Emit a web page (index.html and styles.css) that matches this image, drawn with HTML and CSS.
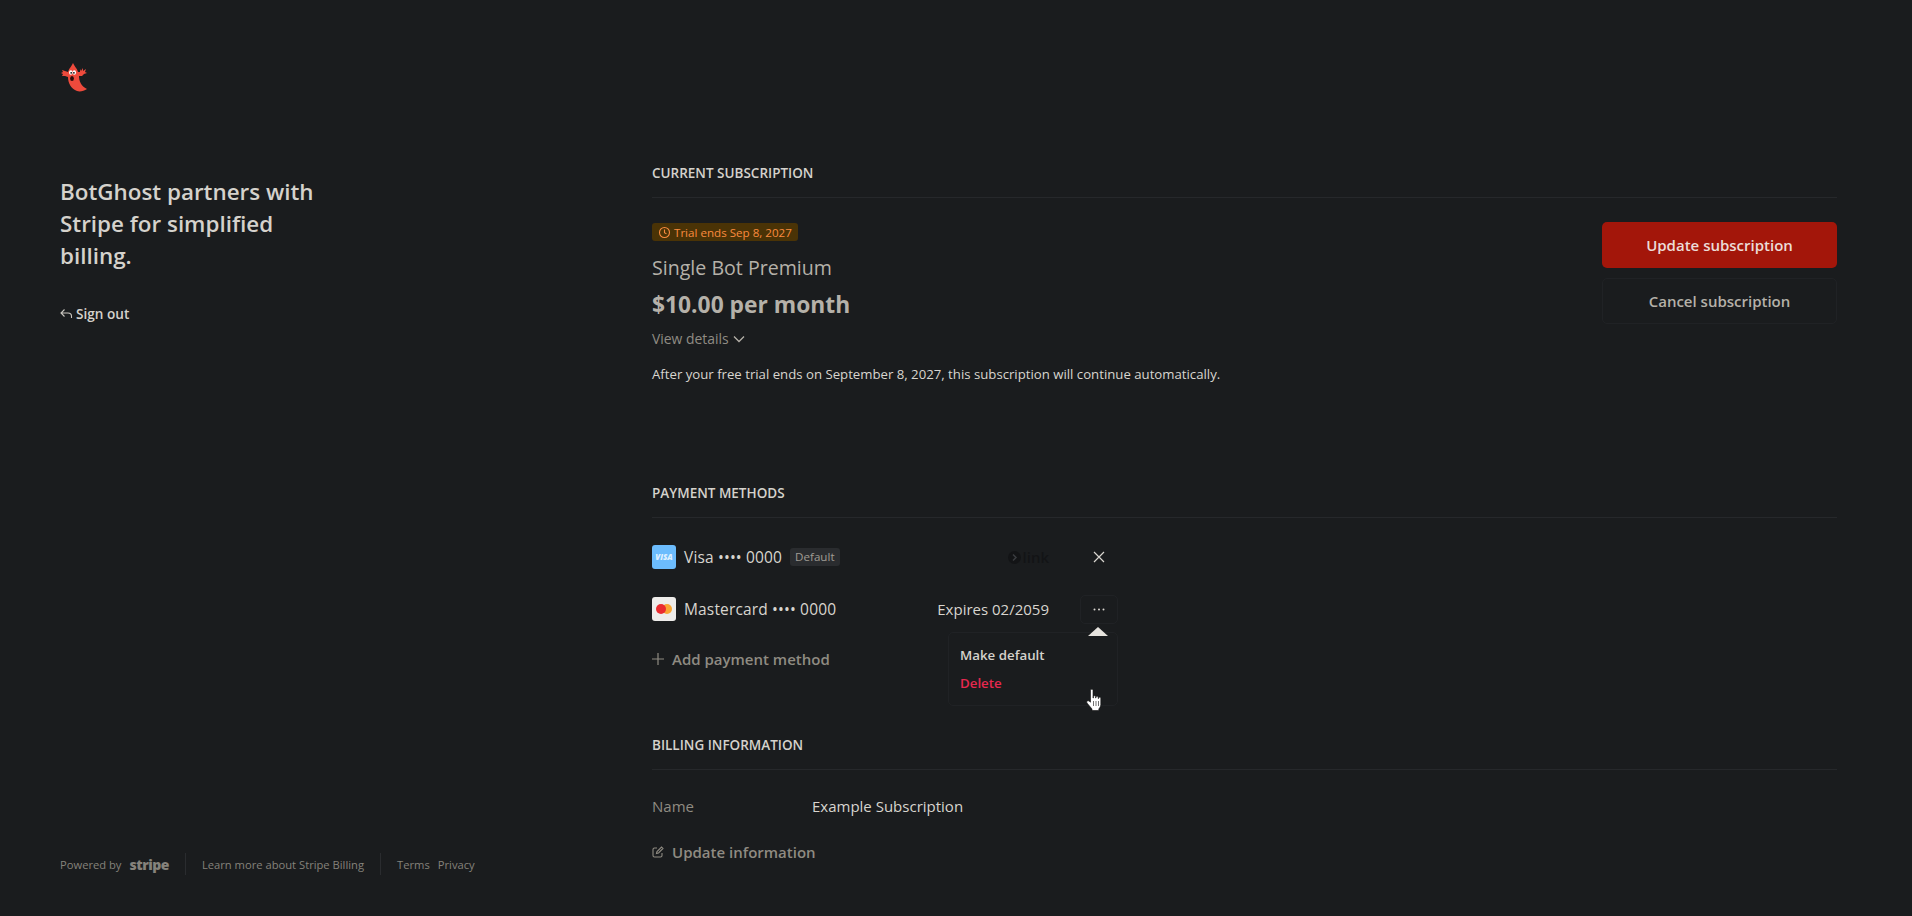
FILE: index.html
```html
<!DOCTYPE html>
<html lang="en">
<head>
<meta charset="UTF-8">
<meta name="viewport" content="width=device-width, initial-scale=1.0">
<title>BotGhost billing</title>
<link rel="stylesheet" href="styles.css">
</head>
<body>

<div class="page">
  <aside class="side">
    <div class="side-top">
      <svg class="ghost" width="28" height="29" viewBox="0 0 28 29">
        <path d="M13 0 C14 3 17 5 18 9 L20 9 L20 6 L21 8 L23 5 L23 8 L26 6 L25 9 L27 10 L24 11 L22 13 L19 13 C19 18 21 23 27 26 C24 28 20 29 17 28 C11 26 8 20 8 14 L5 13 L2 13 L3 11 L1 10 L3 9 L2 7 L5 8 L8 9 C9 5 12 3 13 0 Z" fill="#ee4a3c"/>
        <ellipse cx="10.800" cy="9.500" rx="1.800" ry="2.200" fill="#fff"/>
        <ellipse cx="14.300" cy="9.500" rx="1.800" ry="2.200" fill="#fff"/>
        <circle cx="11.200" cy="9.800" r="0.900" fill="#111"/>
        <circle cx="13.900" cy="9.800" r="0.900" fill="#111"/>
        <ellipse cx="12" cy="15.500" rx="1.900" ry="2.500" fill="#2a0c0c"/>
      </svg>
      <h1 class="tagline">BotGhost partners with Stripe for simplified billing.</h1>
      <a class="signout">
        <svg width="13" height="12" viewBox="0 0 13 12" fill="none" stroke="#c9c6c0" stroke-width="1.1"><path d="M4.500 1.500 1 5l3.500 3.500M1 5h7c2 0 3.500 1.300 3.500 3.200V10"/></svg>
        Sign out
      </a>
    </div>
    <div class="side-foot">
      <span>Powered by</span>
      <span class="stripe-logo">stripe</span>
      <span class="foot-sep"></span>
      <span>Learn more about Stripe Billing</span>
      <span class="foot-sep"></span>
      <span>Terms</span>
      <span class="foot-privacy">Privacy</span>
    </div>
  </aside>

  <main class="main">
    <section class="sub">
      <h2 class="sec-title">CURRENT SUBSCRIPTION</h2>
      <div class="sub-body">
        <div class="sub-info">
          <span class="trial">
            <svg width="13" height="13" viewBox="0 0 13 13" fill="none" stroke="#f98b3f" stroke-width="1.1"><circle cx="6.500" cy="6.500" r="5"/><path d="M6.500 3.500v3.200l2 1.200"/></svg>
            Trial ends Sep 8, 2027
          </span>
          <div class="plan">Single Bot Premium</div>
          <div class="price">$10.00 per month</div>
          <div class="details">View details
            <svg width="12" height="8" viewBox="0 0 12 8" fill="none" stroke="#b5b1a9" stroke-width="1.300"><path d="M1 1.500 6 6.500l5-5"/></svg>
          </div>
          <p class="note">After your free trial ends on September 8, 2027, this subscription will continue automatically.</p>
        </div>
        <div class="sub-actions">
          <button class="btn btn-primary">Update subscription</button>
          <button class="btn btn-ghost">Cancel subscription</button>
        </div>
      </div>
    </section>

    <section class="pay">
      <h2 class="sec-title">PAYMENT METHODS</h2>
      <div class="cards">
        <div class="card-row">
          <svg class="card-icon" width="24" height="24" viewBox="0 0 24 24"><rect width="24" height="24" rx="3" fill="#6cbcfd"/><text class="visa-text" x="12" y="15" text-anchor="middle">VISA</text></svg>
          <span class="card-name">Visa •••• 0000</span>
          <span class="default">Default</span>
          <span class="card-right link-mark">
            <svg width="13" height="13" viewBox="0 0 13 13"><circle cx="6.500" cy="6.500" r="6.500" fill="#131416"/><path d="M5 3.500 8 6.500 5 9.500" fill="none" stroke="#3a3c3f" stroke-width="1.500"/></svg>
            link
          </span>
          <span class="card-btn">
            <svg width="12" height="12" viewBox="0 0 12 12" fill="none" stroke="#d9d6d0" stroke-width="1.200"><path d="M1 1l10 10M11 1 1 11"/></svg>
          </span>
        </div>
        <div class="card-row">
          <svg class="card-icon" width="24" height="24" viewBox="0 0 24 24"><rect width="24" height="24" rx="3" fill="#eeecea"/><circle cx="15" cy="12" r="5" fill="#f9a533"/><circle cx="9" cy="12" r="5" fill="#ea2b2f"/></svg>
          <span class="card-name">Mastercard •••• 0000</span>
          <span class="card-right">Expires 02/2059</span>
          <span class="card-btn card-btn-open">
            <svg width="12" height="3" viewBox="0 0 12 3" fill="#d9d6d0"><circle cx="1.500" cy="1.500" r="1"/><circle cx="6" cy="1.500" r="1"/><circle cx="10.500" cy="1.500" r="1"/></svg>
          </span>
          <div class="menu">
            <div class="menu-arrow"></div>
            <div class="menu-item">Make default</div>
            <div class="menu-item menu-danger">Delete</div>
            <svg class="cursor" width="17" height="22" viewBox="0 0 17 22"><path d="M4.500 1.200c0-1.200 2.500-1.200 2.500 0V9h.4V7.500c0-1 2.200-1 2.200 0V9h.4V8c0-1 2.200-1 2.200 0v1.500h.4V9c0-1 2.200-1 2.200.2v6.300c0 2.500-1.500 3.500-2 4.500v1.500H6v-1.500L1 14c-1-1.500.5-3 2-2l1.500 1.200z" fill="#fff" stroke="#111" stroke-width=".6"/><path d="M7.500 12v5M10 12v5M12.500 12v5" stroke="#333" stroke-width=".7"/></svg>
          </div>
        </div>
      </div>
      <a class="add-link">
        <svg width="12" height="12" viewBox="0 0 12 12" fill="none" stroke="#8f8b82" stroke-width="1.200"><path d="M6 0v12M0 6h12"/></svg>
        Add payment method
      </a>
    </section>

    <section class="billing">
      <h2 class="sec-title">BILLING INFORMATION</h2>
      <div class="info-row">
        <span class="info-label">Name</span>
        <span class="info-value">Example Subscription</span>
      </div>
      <a class="add-link">
        <svg width="12" height="12" viewBox="0 0 12 12" fill="none" stroke="#8f8b82" stroke-width="1.100"><path d="M10 7v2.500a1.500 1.500 0 0 1-1.500 1.500h-6A1.500 1.500 0 0 1 1 9.500v-6A1.500 1.500 0 0 1 2.500 2H5"/><path d="M4.500 7.500 5 5.500 9.500 1 11 2.500 6.500 7z"/></svg>
        Update information
      </a>
    </section>
  </main>
</div>

</body>
</html>
```

FILE: styles.css
```css
* {
  box-sizing: border-box;
}

body {
  margin: 0;
  background-color: #1a1c1e;
  color: #d8d5cf;
  font-family: 'Open Sans', 'Noto Sans', sans-serif;
  font-size: 13.2px;
}

.page {
  display: flex;
  height: 916px;
  overflow: hidden;
}

.side {
  width: 652px;
  flex: none;
  padding: 63px 0 41px 60px;
  display: flex;
  flex-direction: column;
  justify-content: space-between;
}

.ghost {
  display: block;
}

.tagline {
  width: 270px;
  margin: 84px 0 0;
  font-size: 22.4px;
  line-height: 32px;
  font-weight: 600;
  color: #d5d2cc;
}

.signout {
  display: flex;
  align-items: center;
  gap: 3px;
  margin-top: 32px;
  font-size: 13.6px;
  font-weight: 600;
  color: #d5d2cc;
}

.side-foot {
  display: flex;
  align-items: center;
  font-size: 11.2px;
  color: #85827b;
  gap: 9px;
}

.stripe-logo {
  font-weight: 800;
  font-size: 14px;
  letter-spacing: -0.5px;
  color: #85827b;
  margin-left: -1px;
}

.foot-sep {
  width: 1px;
  height: 22px;
  background-color: #2a2c2f;
  margin: 0 7px;
}

.foot-privacy {
  margin-left: -1px;
}

.main {
  flex: none;
  width: 1185px;
  padding-top: 163px;
}

.sec-title {
  margin: 0;
  height: 35px;
  line-height: 21px;
  font-size: 13.5px;
  font-weight: 600;
  color: #d5d2cc;
  border-bottom: 1px solid #26282b;
}

.sub {
  height: 320px;
}

.sub-body {
  display: flex;
  justify-content: space-between;
  padding-top: 25px;
}

.trial {
  display: inline-flex;
  align-items: center;
  gap: 3px;
  height: 18px;
  padding: 0 6px;
  border-radius: 3px;
  background-color: #4a3306;
  color: #f98b3f;
  font-size: 11.6px;
}

.plan {
  margin-top: 13px;
  font-size: 19.6px;
  line-height: 24px;
  font-weight: 500;
  color: #b5b1a9;
}

.price {
  margin-top: 10px;
  font-size: 22.8px;
  line-height: 30px;
  font-weight: 700;
  color: #b5b1a9;
}

.details {
  display: flex;
  align-items: center;
  gap: 4px;
  margin-top: 10px;
  line-height: 18px;
  font-size: 13.9px;
  font-weight: 500;
  color: #908c84;
}

.note {
  margin: 16px 0 0;
  line-height: 20px;
  color: #d8d5cf;
}

.sub-actions {
  width: 235px;
  display: flex;
  flex-direction: column;
  gap: 10px;
  margin-top: -1px;
}

.btn {
  height: 46px;
  border-radius: 5px;
  font: inherit;
  font-size: 15px;
  font-weight: 600;
}

.btn-primary {
  border: none;
  background-color: #a3160a;
  color: #ecdcd8;
}

.btn-ghost {
  border: 1px solid #202225;
  background: none;
  color: #b5b1a9;
}

.cards {
  width: 465px;
  padding-top: 13px;
}

.card-row {
  position: relative;
  display: flex;
  align-items: center;
  height: 52px;
  font-size: 15px;
}

.card-icon {
  flex: none;
  margin-right: 8px;
}

.visa-text {
  font-size: 8px;
  font-weight: 800;
  font-style: italic;
  fill: rgba(255, 255, 255, 0.8);
}

.card-name {
  font-size: 15.5px;
  letter-spacing: 0.15px;
  color: #d8d5cf;
}

.default {
  margin-left: 8px;
  padding: 0 5px;
  line-height: 18px;
  border-radius: 3px;
  background-color: #2a2c2f;
  color: #a09c94;
  font-size: 11.6px;
  font-weight: 500;
}

.card-right {
  margin-left: auto;
  color: #d8d5cf;
}

.link-mark {
  display: flex;
  align-items: center;
  gap: 2px;
  color: #131416;
  font-weight: 600;
}

.card-btn {
  display: flex;
  align-items: center;
  justify-content: center;
  width: 38px;
  height: 29px;
  margin-left: 31px;
  border-radius: 5px;
  margin-right: -1px;
}

.card-btn-open {
  border: 1px solid #202225;
}

.menu {
  position: absolute;
  top: 49px;
  right: -1px;
  width: 170px;
  height: 74px;
  padding: 13px 11px;
  border: 1px solid #202225;
  border-radius: 5px;
  background-color: #1a1c1e;
  font-size: 13.3px;
  font-weight: 600;
  z-index: 2;
}

.menu-arrow {
  position: absolute;
  top: -6px;
  right: 9px;
  width: 0;
  height: 0;
  border-left: 10px solid transparent;
  border-right: 10px solid transparent;
  border-bottom: 9px solid #e6e3de;
}

.menu-item {
  line-height: 18px;
  margin-bottom: 10px;
  color: #d5d2cc;
}

.menu-danger {
  color: #e5284f;
}

.cursor {
  position: absolute;
  top: 56px;
  right: 14px;
}

.add-link {
  display: flex;
  align-items: center;
  gap: 8px;
  font-size: 15px;
  font-weight: 600;
  color: #8f8b82;
}

.pay .add-link {
  margin-top: 14px;
}

.billing {
  margin-top: 66px;
}

.info-row {
  display: flex;
  align-items: center;
  height: 24px;
  margin-top: 24px;
  font-size: 15px;
}

.info-label {
  width: 160px;
  color: #8f8b82;
}

.info-value {
  color: #d8d5cf;
}

.billing .add-link {
  margin-top: 24px;
}
```
